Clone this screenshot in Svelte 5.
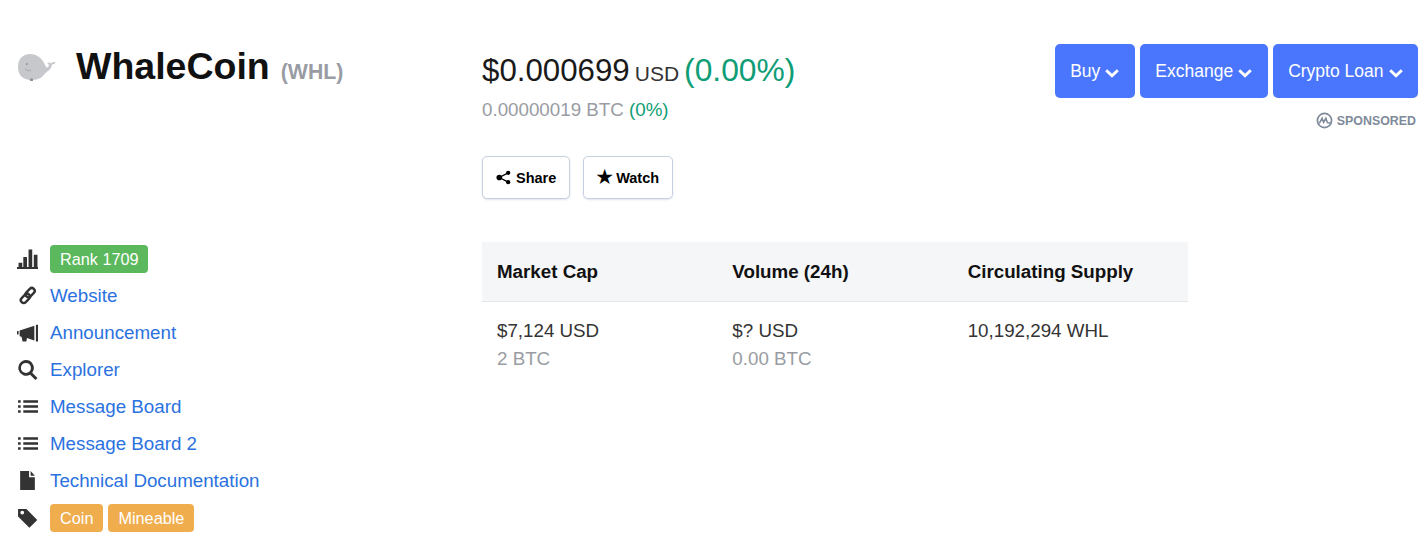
<script>
  const links = [
    { label: 'Website', icon: 'link' },
    { label: 'Announcement', icon: 'horn' },
    { label: 'Explorer', icon: 'search' },
    { label: 'Message Board', icon: 'list' },
    { label: 'Message Board 2', icon: 'list' },
    { label: 'Technical Documentation', icon: 'file' }
  ];
  const buttons = ['Buy', 'Exchange', 'Crypto Loan'];
  const stats = [
    { head: 'Market Cap', main: '$7,124 USD', sub: '2 BTC' },
    { head: 'Volume (24h)', main: '$? USD', sub: '0.00 BTC' },
    { head: 'Circulating Supply', main: '10,192,294 WHL', sub: '' }
  ];
</script>

{#snippet icon(name)}
  <svg class="icon" viewBox="0 0 20 20" aria-hidden="true">
    {#if name === 'bars'}
      <path d="M0 18h20v2H0zM1.500 14h3.500v4H1.500zM6 8.500h3.500V18H6zM11 1.500h3.500V18H11zM16 6.500h3.500V18H16z" />
    {:else if name === 'link'}
      <g fill="none" stroke="#333" stroke-width="2.300">
        <rect x="3" y="10" width="10" height="5.500" rx="2.700" transform="rotate(-45 8 12.750)" />
        <rect x="7.500" y="4.500" width="10" height="5.500" rx="2.700" transform="rotate(-45 12.500 7.250)" />
      </g>
    {:else if name === 'horn'}
      <path d="M0 8.500h1.500v3.500H0zM2.500 8L16.500 3.500v14l-7-2.200-.6 3.200H5.300l-1-4.500-1.800-.5zM18 2.500h2.200v16H18z" />
    {:else if name === 'search'}
      <path d="M8.500 1a7.500 7.500 0 0 1 6 12l5 5-2 2-5-5a7.500 7.500 0 1 1-4-14zm0 2.700a4.800 4.800 0 1 0 0 9.600 4.800 4.800 0 0 0 0-9.600z" />
    {:else if name === 'list'}
      <path d="M1 4h2.500v2.500H1zM1 8.800h2.500v2.500H1zM1 13.500h2.500V16H1zM6 4h14v2.500H6zM6 8.800h14v2.500H6zM6 13.500h14V16H6z" />
    {:else if name === 'file'}
      <path d="M3 1h8.500v6H17v12H3zM13 1l4 4.500h-4z" />
    {:else if name === 'tag'}
      <path fill-rule="evenodd" d="M1 2h8l10.300 10.300-7.500 7.500L1 9zm4 1.500a1.800 1.800 0 1 0 0 3.600 1.800 1.800 0 0 0 0-3.600z" />
    {/if}
  </svg>
{/snippet}

{#snippet chevron()}
  <svg class="chev" viewBox="0 0 14 10" aria-hidden="true">
    <path d="M2.200 1.200L7 5.800l4.800-4.600L13.800 3.200 7 9.800.2 3.200z" />
  </svg>
{/snippet}

<div class="page">
  <aside class="side">
    <h1 class="title">
      <svg class="whale" viewBox="0 0 42 30" aria-hidden="true">
        <path fill="#c6c8cb" d="M1 16C1 8 6 3 13 3c7 0 12 4 15 11 1 2 2 3 3 2 1-1 1-2 .5-3l-1.500-1 3-.5 1 1 2-1.500 3 .5-2 1.500-2 .5c-.5 4-3 6-5.500 7.500C26 24 25 29 14 29 6 29 1 24 1 16z" />
        <path fill="#8f9296" d="M9 12h1.500v2H9zM13 27.500h3V30h-3z" />
        <path fill="none" stroke="#a4a7ab" d="M8 18c2 2 4 2 6 1" />
      </svg>
      <span class="name">WhaleCoin</span>
      <small class="symbol">(WHL)</small>
    </h1>

    <ul class="links">
      <li>
        {@render icon('bars')}
        <span class="badge green">Rank 1709</span>
      </li>
      {#each links as link}
        <li>
          {@render icon(link.icon)}
          <a href="#top">{link.label}</a>
        </li>
      {/each}
      <li>
        {@render icon('tag')}
        <span class="badge orange">Coin</span>
        <span class="badge orange">Mineable</span>
      </li>
    </ul>
  </aside>

  <main class="center">
    <div class="price">
      <span class="big">$0.000699</span>
      <span class="usd">USD</span>
      <span class="big up">(0.00%)</span>
    </div>
    <div class="btc">0.00000019 BTC <span class="up">(0%)</span></div>

    <div class="actions">
      <button class="ghost">
        <svg class="small-icon" viewBox="0 0 16 16" aria-hidden="true">
          <circle cx="3.500" cy="8" r="3" /><circle cx="13" cy="3" r="2.300" /><circle cx="13" cy="13" r="2.300" />
          <path d="M3.500 8L13 3M3.500 8L13 13" stroke="#000" stroke-width="1.500" />
        </svg>
        Share
      </button>
      <button class="ghost">
        <span class="star">★</span>
        Watch
      </button>
    </div>

    <table class="stats">
      <thead>
        <tr>
          {#each stats as s}<th>{s.head}</th>{/each}
        </tr>
      </thead>
      <tbody>
        <tr>
          {#each stats as s}
            <td>{s.main}<br /><span class="muted">{s.sub}</span></td>
          {/each}
        </tr>
      </tbody>
    </table>
  </main>

  <div class="right">
    <div class="buy-row">
      {#each buttons as b}
        <button class="buy">{b} {@render chevron()}</button>
      {/each}
    </div>
    <div class="sponsored">
      <svg class="cmc" viewBox="0 0 18 18" aria-hidden="true">
        <circle cx="9" cy="9" r="7.500" fill="none" stroke="#7e8a9a" stroke-width="1.800" />
        <path d="M3.500 12L6.500 6.500 8 11l2.500-4.500L12 11c1 1.200 2 .8 3-.2" fill="none" stroke="#7e8a9a" stroke-width="1.600" />
      </svg>
      SPONSORED
    </div>
  </div>
</div>

<style>
  :global(body) {
    margin: 0;
    background: #fff;
    font-family: "Liberation Sans", Arial, sans-serif;
    color: #333;
  }

  .page {
    display: grid;
    grid-template-columns: 482px 706px 1fr;
    height: 551px;
    overflow: hidden;
    box-sizing: border-box;
    font-size: 18.75px;
  }

  .side {
    grid-area: 1 / 1;
    padding: 43px 0 0 17px;
  }

  .title {
    display: flex;
    align-items: baseline;
    margin: 0;
    height: 197px;
    font-size: 37.5px;
    line-height: 46px;
    color: #111;
  }

  .whale {
    width: 42px;
    height: 30px;
    margin-right: 17px;
    align-self: flex-start;
    margin-top: 8px;
  }

  .symbol {
    margin-left: 11px;
    font-size: 21.25px;
    color: #999ca3;
  }

  .links {
    list-style: none;
    margin: 0;
    padding: 0;
  }

  .links li {
    display: flex;
    align-items: center;
    height: 37px;
    line-height: 37px;
  }

  .icon {
    width: 21px;
    height: 21px;
    margin-right: 12px;
    fill: #333;
    flex: none;
  }

  .links a {
    color: #2b72e0;
    text-decoration: none;
  }

  .badge {
    height: 28px;
    line-height: 28px;
    padding: 0 10px;
    margin-right: 5px;
    border-radius: 4px;
    font-size: 16.25px;
    color: #fff;
  }

  .green {
    padding-right: 9px;
    background: #5cb85c;
  }

  .orange { background: #f0ad4e; }

  .center {
    grid-area: 1 / 2;
    padding-top: 50px;
  }

  .price {
    display: flex;
    align-items: baseline;
    gap: 5px;
    height: 40px;
    line-height: 40px;
    color: #333;
    font-size: 21px;
  }

  .big {
    font-size: 31.25px;
    color: #1a1a1a;
  }

  .big.up {
    font-size: 31.75px;
    color: #0f9d76;
  }

  .up { color: #0f9d76; }

  .btc {
    margin-top: 8px;
    line-height: 24px;
    color: #999ca3;
  }

  .actions {
    display: flex;
    gap: 13px;
    margin-top: 34px;
  }

  .ghost {
    display: flex;
    align-items: center;
    justify-content: center;
    gap: 5px;
    height: 43px;
    padding: 0 13px;
    border: 1px solid #c5d0e0;
    border-radius: 5px;
    background: #fff;
    box-shadow: 0 1px 2px rgba(60, 80, 110, 0.15);
    font: bold 14.500px "Liberation Sans", Arial, sans-serif;
    color: #000;
  }

  .small-icon {
    width: 15px;
    height: 15px;
    fill: #000;
  }

  .star {
    font-family: "DejaVu Sans", sans-serif;
    font-size: 21px;
    line-height: 1;
    margin: 0 -3px 0 -2px;
  }

  .stats {
    width: 100%;
    margin-top: 43px;
    border-collapse: collapse;
    table-layout: fixed;
  }

  .stats th {
    height: 59px;
    padding: 0 15px;
    background: #f5f6f8;
    border-bottom: 1px solid #e3e5e8;
    text-align: left;
    font-weight: bold;
    color: #111;
  }

  .stats td {
    padding: 15px 15px 0;
    line-height: 28px;
    vertical-align: top;
  }

  .muted { color: #999ca3; }

  .right {
    grid-area: 1 / 2 / 1 / 4;
    justify-self: end;
    padding: 44px 10px 0 0;
    display: flex;
    flex-direction: column;
    align-items: flex-end;
  }

  .buy-row {
    display: flex;
    gap: 5px;
  }

  .buy {
    display: flex;
    align-items: center;
    gap: 5px;
    height: 54px;
    padding: 0 15.500px;
    border: 0;
    border-radius: 5px;
    background: #4a76fd;
    color: #fff;
    font: 17.500px "Liberation Sans", Arial, sans-serif;
    white-space: nowrap;
  }

  .chev {
    width: 14px;
    height: 10px;
    fill: #fff;
    margin-top: 3px;
  }

  .sponsored {
    display: flex;
    align-items: center;
    gap: 4px;
    margin: 14px 2px 0 0;
    font-size: 12.400px;
    font-weight: bold;
    color: #7e8a9a;
  }

  .cmc {
    width: 17px;
    height: 17px;
  }
</style>
